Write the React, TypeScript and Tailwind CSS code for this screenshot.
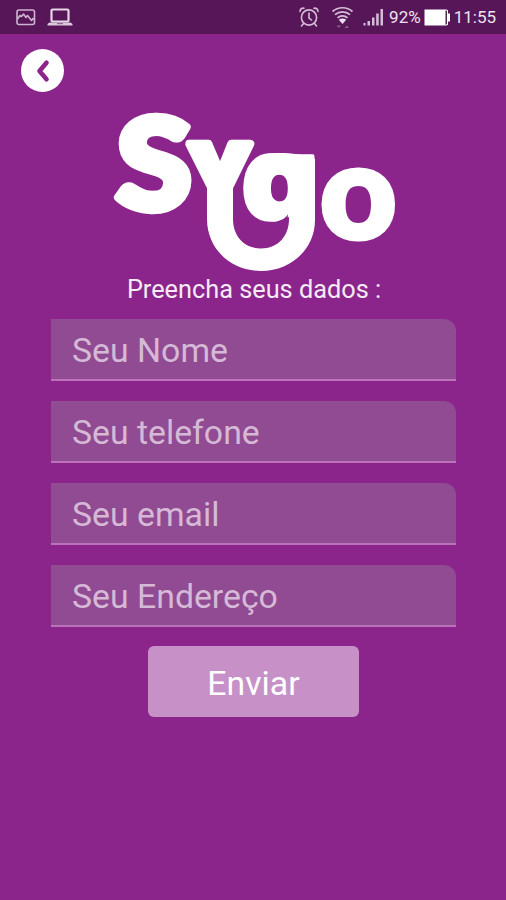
const FIELDS = [
  { id: "nome", label: "Seu Nome", type: "text" },
  { id: "telefone", label: "Seu telefone", type: "tel" },
  { id: "email", label: "Seu email", type: "email" },
  { id: "endereco", label: "Seu Endereço", type: "text" },
];

function StatusBar() {
  return (
    <div className="flex h-[34px] items-center justify-between bg-[#561657] pl-[15px] pr-[10px] text-[#f0e2f0]">
      <div className="flex items-center gap-[11px]">
        {/* picture */}
        <svg width="21" height="18" viewBox="0 0 21 18" fill="none" stroke="#cfb3d0" strokeWidth="1.6">
          <rect x="2" y="2" width="17.5" height="14.5" rx="2" />
          <path d="M2.5 11 5 7.5l1.5 1 2-2.5 2.5 3.500 1.500-2 4 5 1.500-2 1 1" strokeLinejoin="round" />
        </svg>
        {/* laptop */}
        <svg width="26" height="20" viewBox="0 0 26 20">
          <rect x="4.5" y="2.5" width="17" height="12" rx="1.2" fill="none" stroke="#e6d6e7" strokeWidth="2.2" />
          <path d="M2.5 15.5h21l2 1.500v1.500H0.500V17z" fill="#dcc8dd" />
          <path d="M10 16h6v1.200h-6z" fill="#8f6a90" />
        </svg>
      </div>

      <div className="flex items-center">
        {/* alarm */}
        <svg width="22" height="22" viewBox="0 0 22 22" fill="none" stroke="#d6bdd7" strokeWidth="1.6" strokeLinecap="round">
          <circle cx="11" cy="11.5" r="7.6" />
          <path d="M11 7v5l2.500 2" />
          <path d="M2 5.500C2 3 4 1.800 6 2.200M20 5.500c0-2.500-2-3.700-4-3.300M5.500 17.500 3.500 20M16.500 17.500l2 2.500" />
        </svg>
        {/* wifi */}
        <svg className="ml-[11px]" width="23" height="24" viewBox="0 0 23 24" fill="none" stroke="#d6bdd7" strokeWidth="1.7">
          <path d="M1.500 6.500C7 1.500 16 1.500 21.500 6.500M4 9.700c4.300-3.900 10.700-3.900 15 0M6.500 12.800c2.900-2.700 7.100-2.700 10 0" />
          <path d="M7.800 14.800c2.200-1.700 5.200-1.700 7.400 0l-3.700 4.200z" fill="#eddfee" stroke="none" />
          <path d="M5.500 20.500h4.500L7.800 23zM13.500 23h4.500L15.800 20.500z" fill="#8a5f8b" stroke="none" />
        </svg>
        {/* signal */}
        <svg className="ml-[9px]" width="21" height="20" viewBox="0 0 21 20" fill="#d6bdd7">
          <path d="M0.500 16h2v2.500h-2zM4.500 14h2.500v4.500H4.500zM9 10.500h2.500v8H9zM13.200 6.500h2.500v12h-2.500zM17.500 2H20v16.500h-2.500z" />
        </svg>
        <span className="ml-[5px] text-[17px] leading-[20px]">92%</span>
        <svg className="ml-[3px]" width="26" height="17" viewBox="0 0 26 17">
          <rect x="0.5" y="0.5" width="22.5" height="16" fill="#fff" />
          <path d="M21.500 1.500h1.500v14h-1.500z" fill="#4a2a4b" />
          <path d="M23 1h1v3.500h2v8h-2V16h-1z" fill="#fff" />
        </svg>
        <span className="ml-[4px] text-[17px] leading-[20px]">11:55</span>
      </div>
    </div>
  );
}

function Logo() {
  return (
    <svg
      className="overflow-visible"
      width="286"
      height="162"
      viewBox="111 110 286 162"
      fill="#fff"
      stroke="#fff"
      strokeLinejoin="round"
      role="img"
      aria-label="Sygo"
    >
      <clipPath id="g-bowl">
        <path d="M236 145H315V217H289L276 222H236Z" />
      </clipPath>
      <text
        transform="translate(115.500 208.500) rotate(1) scale(1.370 1.260)"
        fontSize="100"
        strokeWidth="6.5"
        className="font-black font-['Lato',sans-serif]"
      >
        S
      </text>
      <text
        transform="translate(187.200 213) scale(0.840 0.950)"
        fontSize="100"
        strokeWidth="9"
        className="font-black font-['Inter',sans-serif]"
      >
        Y
      </text>
      <g clipPath="url(#g-bowl)">
        <text
          transform="translate(241.500 221) scale(1.190 1.200)"
          fontSize="100"
          strokeWidth="3"
          className="font-black font-['Inter',sans-serif]"
        >
          g
        </text>
      </g>
      {/* smile that joins both stems, with its rounded shoulder */}
      <path
        d="M207 184V219C207 249 231 271 261 271S315 249 315 220V160C315 158.500 314 158 313 157.700C300 153.500 278 151.500 264 154.500L275 171H289V219C289 236 278 248.500 261 248.500S233 236 233 219V184Z"
        stroke="none"
      />
      <text
        transform="translate(320.300 237.500) scale(1.317 1.290)"
        fontSize="100"
        strokeWidth="4"
        className="font-black font-['Lato',sans-serif]"
      >
        o
      </text>
    </svg>
  );
}

export default function App() {
  return (
    <main className="min-h-[900px] bg-[#8b258c] font-['Roboto',sans-serif]">
      <StatusBar />

      <header className="pl-[21px] pt-[15px]">
        <button
          type="button"
          aria-label="Voltar"
          className="flex h-[43px] w-[43px] items-center justify-center rounded-full bg-white"
        >
          <svg width="14" height="24" viewBox="0 0 14 24" fill="none" stroke="#8b258c" strokeWidth="4.6" strokeLinecap="round" strokeLinejoin="round">
            <path d="M10.500 3.800 3.500 12l7 8.200" />
          </svg>
        </button>
      </header>

      <div className="mt-[18px] flex justify-center pl-[2px]">
        <Logo />
      </div>

      <form className="flex flex-col items-center" onSubmit={(e) => e.preventDefault()}>
        <h1 className="mt-[3px] h-[44px] whitespace-nowrap pl-[2px] text-[25.3px] leading-[30px] text-[#f6eaf6]">
          Preencha seus dados :
        </h1>

        <div className="flex w-[405px] flex-col gap-[20px]">
          {FIELDS.map((f) => (
            <input
              key={f.id}
              type={f.type}
              placeholder={f.label}
              className="h-[62px] w-full rounded-tr-[12px] border-b-2 border-[#bb72bb] bg-[#914b92] pl-[21.5px] pt-[3px] text-[33.8px] text-white outline-none placeholder:text-[#d5b9d6]"
            />
          ))}
        </div>

        <button
          type="submit"
          className="mt-[19px] h-[71px] w-[211px] rounded-[6px] bg-[#c791c8] pl-[1px] pt-[6px] text-[33.8px] text-white"
        >
          Enviar
        </button>
      </form>
    </main>
  );
}
